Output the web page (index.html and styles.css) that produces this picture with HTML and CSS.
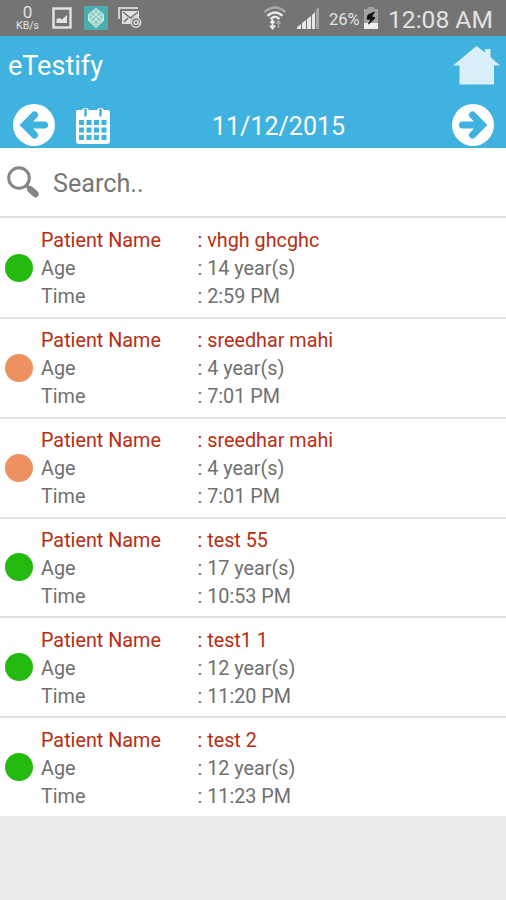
FILE: index.html
```html
<!DOCTYPE html>
<html lang="en">
<head>
  <meta charset="UTF-8">
  <meta name="viewport" content="width=device-width, initial-scale=1.0">
  <title>eTestify</title>
  <link rel="stylesheet" href="styles.css">
</head>
<body>
  <div class="status-bar">
    <div class="speed"><span class="speed-num">0</span><span class="speed-unit">KB/s</span></div>
    <svg class="picture-icon" width="20" height="22" viewBox="0 0 20 22">
      <rect x="1.5" y="1.5" width="17" height="19" fill="none" stroke="#e4e4e4" stroke-width="2.4"/>
      <path d="M4.5 16v-4l3-1 2.500 1.500 5-4.500V16z" fill="#e4e4e4"/>
    </svg>
    <svg class="app-icon" width="24" height="24" viewBox="0 0 24 24">
      <rect width="24" height="24" fill="#4aaeae"/>
      <path d="M12 2l7.500 6v7L12 22l-7.500-7V8z" fill="#8ccac7"/>
      <path d="M12 2.500l7.500 6v6L12 21.500l-7.500-7v-6zM6 8l10 9M9 5.500l10 9M4.500 12l7 7M18 8L8 17M15 5.500L5 14.500M19.500 12l-7 7" fill="none" stroke="#d8f0ec" stroke-width="1"/>
    </svg>
    <svg class="mail-icon" width="24" height="22" viewBox="0 0 24 22">
      <path d="M1 12V1h19" fill="none" stroke="#d0d0d0" stroke-width="2"/>
      <path d="M4 4h17v13H4z" fill="#e0e0e0"/>
      <path d="M5 5l7.500 6L20 5M6 15l4-4" fill="none" stroke="#747474" stroke-width="1.600"/>
      <circle cx="18" cy="15.500" r="5.500" fill="#747474"/>
      <circle cx="18" cy="15.500" r="4.700" fill="none" stroke="#dcdcdc" stroke-width="1.500"/>
      <circle cx="18" cy="15.500" r="1.900" fill="none" stroke="#dcdcdc" stroke-width="1.400"/>
      <path d="M20 13v4l2 0" fill="none" stroke="#dcdcdc"/>
    </svg>
    <svg class="wifi-icon" width="24" height="24" viewBox="0 0 24 24">
      <path d="M1.500 6Q12-3 22.500 6" fill="none" stroke="#a8a8a8" stroke-width="2.400"/>
      <path d="M4.500 9.800Q12 3 19.500 9.800M7.500 13Q12 8.500 16.500 13" fill="none" stroke="#e8e8e8" stroke-width="2.400"/>
      <path d="M9.500 15v7M7 19.500l2.500 3 2.500-3M7.500 17l2-2.500 2 2.500" fill="none" stroke="#eee" stroke-width="1.800"/>
      <path d="M15.500 22v-7M13.500 17.500l2-2.500 2 2.500" fill="none" stroke="#a8a8a8" stroke-width="1.500"/>
    </svg>
    <svg class="signal-icon" width="23" height="22" viewBox="0 0 23 22">
      <path d="M0 22v-2l4-3v5zM5 22v-6l4-3v9zM10 22V12l4-3v13zM15 22V8l3-3v17z" fill="#e6e6e6"/>
      <path d="M19 22V3l3-3v22z" fill="#a5a5a5"/>
    </svg>
    <span class="percent">26%</span>
    <svg class="battery-icon" width="14" height="22" viewBox="0 0 14 22">
      <path d="M4 0h6v2h4v20H0V2h4z" fill="#a2a2a2"/>
      <path d="M0 16h14v6H0z" fill="#f0f0f0"/>
      <path d="M10.500 5L4 8l-1 4 4 .5L4.500 17 11 11 7.500 9.500z" fill="#111" stroke="#111"/>
    </svg>
    <span class="clock">12:08 AM</span>
  </div>

  <div class="header">
    <div class="title-row">
      <h1>eTestify</h1>
      <svg width="47" height="39" viewBox="0 0 47 39">
        <path d="M23.500 0L32 6.500V3h5.500v8L47 19.500h-6V38.500H6.500V19.500H0z" fill="#d9f0fa"/>
      </svg>
    </div>
    <div class="date-row">
      <svg class="prev" width="42" height="42" viewBox="0 0 42 42">
        <circle cx="21" cy="21" r="21" fill="#fff"/>
        <path d="M31.500 21H13M21.500 11L11.500 21l10 10" fill="none" stroke="#3fb2e0" stroke-width="7" stroke-linecap="round"/>
      </svg>
      <svg class="calendar" width="36" height="38" viewBox="0 0 36 38">
        <path d="M3 4h4a3.800 3.800 0 0 1 7 0h8a3.800 3.800 0 0 1 7 0h4q2 0 2 2v29q0 3-3 3H4q-3 0-3-3V6q0-2 2-2z" fill="#fff"/>
        <path d="M10.500 3.500v6M25.500 3.500v6" stroke="#3fb2e0" stroke-width="2.400" stroke-linecap="round"/>
        <path d="M4 14h5v5H4zM11.500 14h5v5h-5zM19 14h5v5h-5zM26.500 14h5v5h-5zM4 21.500h5v5H4zM11.500 21.500h5v5h-5zM19 21.500h5v5h-5zM26.500 21.500h5v5h-5zM4 29h5v5H4zM11.500 29h5v5h-5zM19 29h5v5h-5zM26.500 29h5v5h-5z" fill="#3fb2e0"/>
      </svg>
      <span class="date">11/12/2015</span>
      <svg class="next" width="42" height="42" viewBox="0 0 42 42">
        <circle cx="21" cy="21" r="21" fill="#fff"/>
        <path d="M10.500 21H29M20.500 11l10 10-10 10" fill="none" stroke="#3fb2e0" stroke-width="7" stroke-linecap="round"/>
      </svg>
    </div>
  </div>

  <div class="search">
    <svg width="32" height="32" viewBox="0 0 32 32">
      <circle cx="12" cy="12" r="10.300" fill="none" stroke="#858585" stroke-width="3"/>
      <path d="M19 19l4 4" stroke="#858585" stroke-width="3.500"/>
      <path d="M23.500 23.500l5 4.500" stroke="#858585" stroke-width="6.500" stroke-linecap="round"/>
    </svg>
    <span>Search..</span>
  </div>

  <div class="list">
    <div class="row">
      <span class="dot green"></span>
      <div class="info">
        <span class="name">Patient Name</span><span class="name">: vhgh ghcghc</span>
        <span>Age</span><span>: 14 year(s)</span>
        <span>Time</span><span>: 2:59 PM</span>
      </div>
    </div>
    <div class="row">
      <span class="dot orange"></span>
      <div class="info">
        <span class="name">Patient Name</span><span class="name">: sreedhar mahi</span>
        <span>Age</span><span>: 4 year(s)</span>
        <span>Time</span><span>: 7:01 PM</span>
      </div>
    </div>
    <div class="row">
      <span class="dot orange"></span>
      <div class="info">
        <span class="name">Patient Name</span><span class="name">: sreedhar mahi</span>
        <span>Age</span><span>: 4 year(s)</span>
        <span>Time</span><span>: 7:01 PM</span>
      </div>
    </div>
    <div class="row">
      <span class="dot green"></span>
      <div class="info">
        <span class="name">Patient Name</span><span class="name">: test 55</span>
        <span>Age</span><span>: 17 year(s)</span>
        <span>Time</span><span>: 10:53 PM</span>
      </div>
    </div>
    <div class="row">
      <span class="dot green"></span>
      <div class="info">
        <span class="name">Patient Name</span><span class="name">: test1 1</span>
        <span>Age</span><span>: 12 year(s)</span>
        <span>Time</span><span>: 11:20 PM</span>
      </div>
    </div>
    <div class="row">
      <span class="dot green"></span>
      <div class="info">
        <span class="name">Patient Name</span><span class="name">: test 2</span>
        <span>Age</span><span>: 12 year(s)</span>
        <span>Time</span><span>: 11:23 PM</span>
      </div>
    </div>
  </div>
</body>
</html>
```

FILE: styles.css
```css
* {
  box-sizing: border-box;
}

body {
  margin: 0;
  height: 100vh;
  background: #ededed;
  font-family: Roboto, "Liberation Sans", sans-serif;
  overflow: hidden;
}

svg {
  display: block;
  flex-shrink: 0;
}

/* status bar */
.status-bar {
  display: flex;
  align-items: center;
  height: 36px;
  padding-left: 15px;
  background: #747474;
  color: #e2e2e2;
  white-space: nowrap;
}

.speed {
  display: flex;
  flex-direction: column;
  align-items: center;
  width: 25px;
}

.speed-num {
  font-size: 17px;
  line-height: 16px;
}

.speed-unit {
  font-size: 10.5px;
  line-height: 12px;
}

.picture-icon {
  margin-left: 12px;
}

.app-icon {
  margin-left: 12px;
}

.mail-icon {
  margin-left: 10px;
}

.wifi-icon {
  margin-left: 121px;
}

.signal-icon {
  margin-left: 10px;
}

.percent {
  width: 35px;
  margin-left: 9px;
  padding-top: 2px;
  font-size: 16.5px;
}

.battery-icon {
  margin-left: 0;
}

.clock {
  margin-left: 10px;
  padding-top: 2px;
  font-size: 24.6px;
}

/* header */
.header {
  height: 112px;
  background: #3fb2e0;
  color: #fff;
}

.title-row {
  display: flex;
  justify-content: space-between;
  align-items: center;
  height: 58px;
  padding: 0 6px 0 8px;
}

h1 {
  margin: 0;
  padding-top: 2px;
  font-size: 27px;
  font-weight: 400;
}

.date-row {
  display: flex;
  align-items: center;
  height: 54px;
  padding: 8px 12px 0 13px;
}

.calendar {
  margin-left: 20px;
}

.date {
  flex: 1;
  padding: 3px 0 0 101px;
  font-size: 25px;
}

/* search */
.search {
  display: flex;
  align-items: center;
  gap: 14px;
  height: 68px;
  padding-left: 7px;
  background: #fff;
  color: #777;
  font-size: 25.2px;
}

.search span {
  padding-top: 2px;
}

/* patients */
.row {
  display: flex;
  align-items: center;
  gap: 8px;
  height: 99.8px;
  padding: 0 0 0 5px;
  border-top: 2px solid #e2e2e2;
  background: #fff;
}

.row:first-child {
  height: 101px;
}

.dot {
  width: 28px;
  height: 28px;
  border-radius: 50%;
}

.green {
  background: #23b90f;
}

.orange {
  background: #ec915f;
}

.info {
  display: grid;
  grid-template-columns: 156.5px auto;
  padding-top: 3px;
  line-height: 28px;
  font-size: 19.8px;
  color: #707070;
}

.name {
  color: #b92d12;
}
```
